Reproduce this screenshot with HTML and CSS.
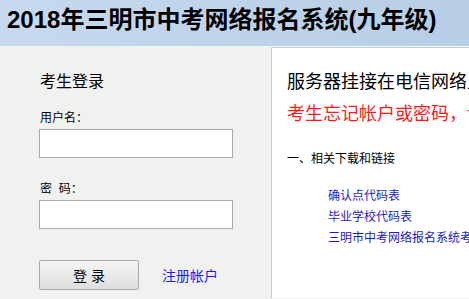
FILE: index.html
```
<!DOCTYPE html>
<html lang="zh-CN">
<head>
  <meta charset="UTF-8" />
  <meta name="viewport" content="width=device-width, initial-scale=1.0" />
  <title>2018年三明市中考网络报名系统(九年级)</title>
  <link rel="stylesheet" href="styles.css">
</head>
<body>
  <div class="header">
    <h1>2018年三明市中考网络报名系统(九年级)</h1>
  </div>

  <div class="main">
    <div class="login">
      <h2>考生登录</h2>
      <label for="user">用户名：</label>
      <input type="text" id="user" />
      <label for="pwd" class="pwd-label">密&nbsp;&nbsp;码：</label>
      <input type="password" id="pwd" />
      <div class="actions">
        <button type="button">登&nbsp;录</button>
        <a href="#" class="reg">注册帐户</a>
      </div>
    </div>

    <div class="notice">
      <p class="line">服务器挂接在电信网络上，请考生耐心等待</p>
      <p class="line red">考生忘记帐户或密码，请与学校联系</p>
      <p class="section">一、相关下载和链接</p>
      <ul class="links">
        <li><a href="#">确认点代码表</a></li>
        <li><a href="#">毕业学校代码表</a></li>
        <li><a href="#">三明市中考网络报名系统考生操作说明</a></li>
      </ul>
    </div>
  </div>
</body>
</html>
```

FILE: styles.css
```
body {
  margin: 0;
  height: 299px;
  font-family: "Liberation Sans", "Noto Sans CJK SC", sans-serif;
  background: #f1f1ef;
  color: #000;
  overflow: hidden;
}
.header {
  height: 46px;
  background: linear-gradient(to right, #c6d9ee, #b7cee6);
}
.header h1 {
  margin: 0;
  padding: 2px 0 0 7px;
  font-size: 24px;
  line-height: 36px;
  font-weight: bold;
  white-space: nowrap;
}
.main {
  display: flex;
  align-items: flex-start;
}
.login {
  width: 231px;
  flex: none;
  padding: 24px 0 0 40px;
  display: flex;
  flex-direction: column;
  align-items: flex-start;
}
.login h2 {
  margin: 0 0 16px;
  font-size: 16px;
  font-weight: normal;
  line-height: 24px;
}
.login label {
  font-size: 12px;
  line-height: 16px;
  margin-bottom: 3px;
}
.login .pwd-label {
  margin-top: 23px;
}
.login input {
  box-sizing: border-box;
  width: 194px;
  height: 29px;
  margin: 0 0 0 -1px;
  border: 1px solid #aaa;
  background: #fff;
  padding: 0 4px;
}
.actions {
  display: flex;
  align-items: center;
  margin: 31px 0 0 -1px;
}
.actions button {
  width: 100px;
  height: 30px;
  border: 1px solid #aaa;
  border-radius: 2px;
  background: linear-gradient(#f5f5f5, #dedede);
  font-family: inherit;
  font-size: 14px;
  color: #000;
}
.reg {
  margin-left: 23px;
  font-size: 14px;
  color: #1818ff;
  text-decoration: none;
}
.notice {
  flex: 1;
  margin-top: 1px;
  height: 228px;
  background: #fff;
  border-top: 1px solid #b8cce0;
  border-left: 1px solid #b8cce0;
  box-shadow: 0 -1px 0 #fbfcfd;
  padding: 22px 0 0 15px;
  white-space: nowrap;
  overflow: hidden;
}
.line {
  margin: 0 0 8px;
  font-size: 18px;
  line-height: 24px;
}
.red {
  color: #ff1a1a;
}
.section {
  margin: 25px 0 19px;
  font-size: 12px;
  line-height: 16px;
}
.links {
  list-style: none;
  margin: 0;
  padding: 0 0 0 41px;
}
.links li {
  font-size: 12px;
  line-height: 21px;
}
.links a {
  color: #1a1acc;
  text-decoration: none;
}
```
